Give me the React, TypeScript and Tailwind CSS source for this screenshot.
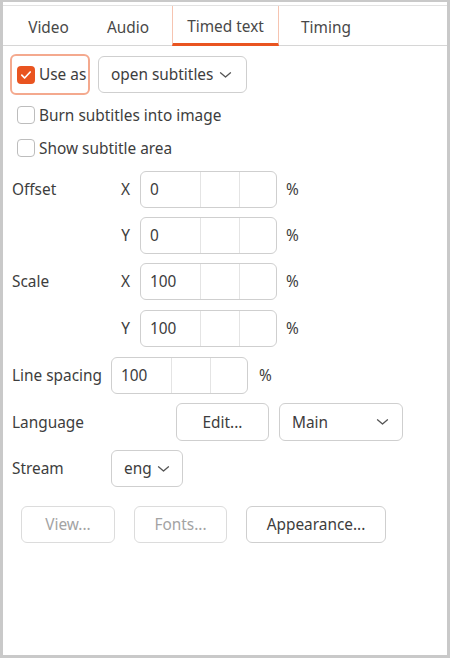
import React from "react";

const Chevron = () => (
  <svg width="13" height="8" viewBox="0 0 13 8" className="shrink-0">
    <path d="M1.5 1.8 L6.5 6 L11.5 1.8" fill="none" stroke="#555555" strokeWidth="1.3" strokeLinecap="round" strokeLinejoin="round" />
  </svg>
);

const Check = ({ checked }: { checked?: boolean }) =>
  checked ? (
    <div className="w-[18px] h-[18px] rounded-[4px] bg-[#e95420] flex items-center justify-center shrink-0">
      <svg width="12" height="10" viewBox="0 0 12 10">
        <path d="M1.8 5.2 L4.6 8 L10.2 2" fill="none" stroke="#ffffff" strokeWidth="1.7" strokeLinecap="round" strokeLinejoin="round" />
      </svg>
    </div>
  ) : (
    <div className="w-[18px] h-[18px] rounded-[4px] border border-[#bdbdbd] bg-white shrink-0" />
  );

const Spin = ({ value }: { value: string }) => (
  <div className="w-[137px] h-[37px] rounded-[6px] border border-[#cfcfcf] flex bg-white shrink-0">
    <div className="w-[59px] flex items-center pl-[9px] pt-[1px]">{value}</div>
    <div className="w-[39px] border-l border-[#e4e4e4]" />
    <div className="flex-1 border-l border-[#e4e4e4]" />
  </div>
);

export default function App() {
  const tabs = [
    { t: "Video", w: "w-[71px]" },
    { t: "Audio", w: "w-[71px]" },
    { t: "Timed text", w: "w-[107px]", active: true },
    { t: "Timing", w: "w-[77px]" },
  ];
  return (
    <div
      className="w-[450px] h-[658px] bg-[#c9c9c9] pt-[2px] pl-[3px] pr-[3px] pb-[3px] text-[15.4px] text-[#3d3d3d]"
      style={{ fontFamily: '"Noto Sans", "Open Sans", sans-serif' }}
    >
      <div className="w-full h-full bg-white pt-[3px] flex flex-col">
        <div className="border-t border-[#e2e2e2] border-b border-b-[#d6d6d6] h-[41px] flex pl-[10px] gap-[8.5px]">
          {tabs.map((tab) =>
            tab.active ? (
              <div
                key={tab.t}
                className={`${tab.w} h-[40px] border-x border-[#f6c4b1] border-b-[3px] border-b-[#e95420] flex items-center justify-center text-[#484848] mb-[-1px] pt-[6px] pb-[1px]`}
              >
                {tab.t}
              </div>
            ) : (
              <div key={tab.t} className={`${tab.w} h-[40px] flex items-center justify-center text-[#484848] pt-[4px]`}>
                {tab.t}
              </div>
            )
          )}
        </div>

        <div className="pl-[7px] flex flex-col">
          <div className="flex items-center mt-[8px] h-[41px]">
            <div className="w-[80px] h-[41px] rounded-[6px] border-2 border-[#f4a98e] flex items-center pl-[5px] gap-[4px]">
              <Check checked />
              <span className="pt-[1px]">Use as</span>
            </div>
            <div className="ml-[8px] w-[149px] h-[37px] rounded-[6px] border border-[#cfcfcf] flex items-center pl-[12px] gap-[6px]">
              <span className="pt-[1px]">open subtitles</span>
              <Chevron />
            </div>
          </div>

          <div className="flex items-center gap-[4px] pl-[7px] mt-[10px] h-[20px]">
            <Check />
            <span className="pt-[2px]">Burn subtitles into image</span>
          </div>
          <div className="flex items-center gap-[4px] pl-[7px] mt-[13px] h-[20px]">
            <Check />
            <span className="pt-[2px]">Show subtitle area</span>
          </div>

          <div className="flex items-center mt-[13px] h-[37px]">
            <div className="w-[101px] pl-[2px] pt-[1px]">Offset</div>
            <div className="w-[29px] text-center pt-[1px]">X</div>
            <Spin value="0" />
            <span className="ml-[9px] pt-[1px]">%</span>
          </div>
          <div className="flex items-center mt-[9px] h-[37px]">
            <div className="w-[101px]" />
            <div className="w-[29px] text-center pt-[1px]">Y</div>
            <Spin value="0" />
            <span className="ml-[9px] pt-[1px]">%</span>
          </div>
          <div className="flex items-center mt-[9px] h-[37px]">
            <div className="w-[101px] pl-[2px] pt-[1px]">Scale</div>
            <div className="w-[29px] text-center pt-[1px]">X</div>
            <Spin value="100" />
            <span className="ml-[9px] pt-[1px]">%</span>
          </div>
          <div className="flex items-center mt-[10px] h-[37px]">
            <div className="w-[101px]" />
            <div className="w-[29px] text-center pt-[1px]">Y</div>
            <Spin value="100" />
            <span className="ml-[9px] pt-[1px]">%</span>
          </div>
          <div className="flex items-center mt-[10px] h-[37px]">
            <div className="w-[101px] pl-[2px] pt-[1px]">Line spacing</div>
            <Spin value="100" />
            <span className="ml-[11px] pt-[1px]">%</span>
          </div>

          <div className="flex items-center mt-[9px] h-[38px]">
            <div className="w-[166px] pl-[2px] pt-[1px]">Language</div>
            <div className="w-[93px] h-[38px] rounded-[6px] border border-[#cfcfcf] flex items-center justify-center pt-[1px]">Edit...</div>
            <div className="ml-[10px] w-[124px] h-[38px] rounded-[6px] border border-[#cfcfcf] flex items-center justify-between pl-[12px] pr-[13px]">
              <span className="pt-[1px]">Main</span>
              <Chevron />
            </div>
          </div>

          <div className="flex items-center mt-[9px] h-[37px]">
            <div className="w-[101px] pl-[2px] pt-[1px]">Stream</div>
            <div className="w-[72px] h-[37px] rounded-[6px] border border-[#cfcfcf] flex items-center pl-[12px] gap-[5px]">
              <span className="pt-[1px]">eng</span>
              <Chevron />
            </div>
          </div>

          <div className="flex items-center mt-[19px] h-[37px] pl-[11px] gap-[19px]">
            <div className="w-[94px] h-[37px] rounded-[6px] border border-[#dcdcdc] flex items-center justify-center text-[#a3a3a3] pt-[1px]">View...</div>
            <div className="w-[93px] h-[37px] rounded-[6px] border border-[#dcdcdc] flex items-center justify-center text-[#a3a3a3] pt-[1px]">Fonts...</div>
            <div className="w-[140px] h-[37px] rounded-[6px] border border-[#cfcfcf] flex items-center justify-center pt-[1px]">Appearance...</div>
          </div>
        </div>
      </div>
    </div>
  );
}
